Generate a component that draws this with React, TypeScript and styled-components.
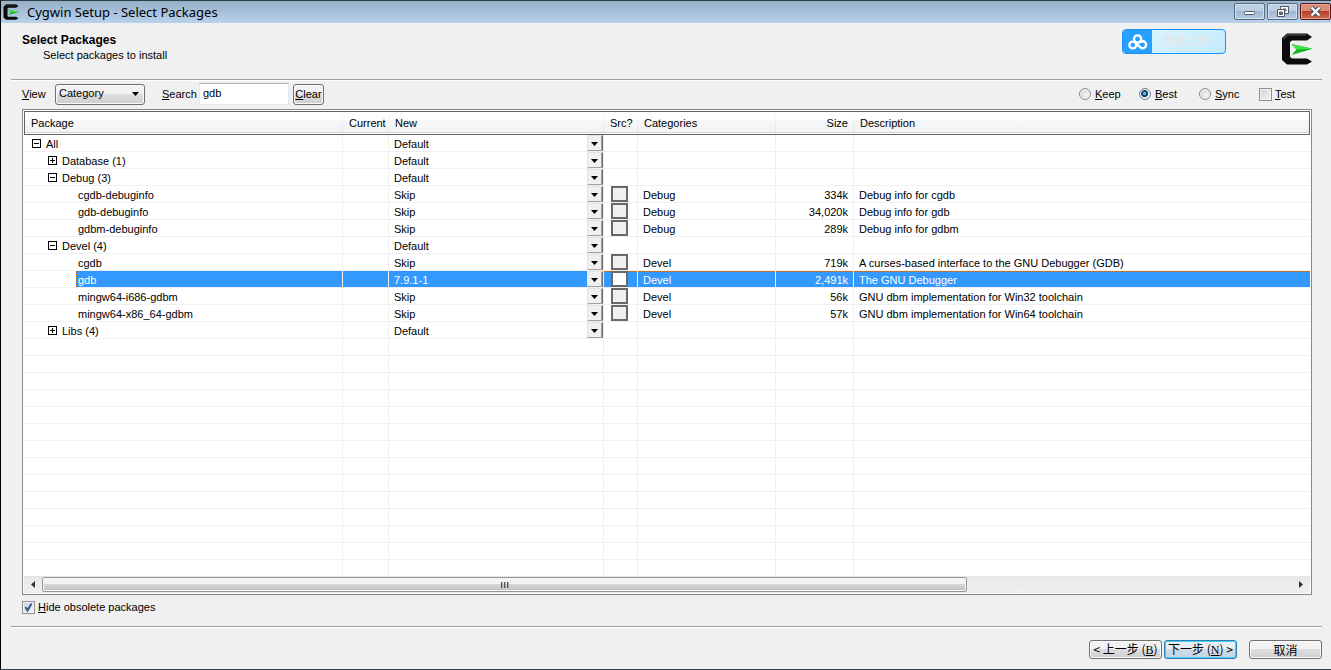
import React from 'react';
import styled, { createGlobalStyle, css } from 'styled-components';

const GlobalStyle = createGlobalStyle`
  * { box-sizing: border-box; }
  body { margin: 0; background: #f0f0f0; }
  body, button, input, select {
    font-family: "Liberation Sans", "Noto Sans CJK SC", sans-serif;
    font-size: 11px;
    line-height: 16px;
    color: #000;
  }
`;

const Window = styled.div`
  display: flex;
  flex-direction: column;
  height: 100vh;
  min-height: 480px;
  background: #f0f0f0;
  border: 1px solid #2f3f49;
  border-left-color: #000;
  border-right: 0;
`;

const TitleBar = styled.header`
  display: flex;
  align-items: center;
  height: 22px;
  padding: 0 0 0 2px;
  background: linear-gradient(#96b0ca, #b9d1ea);
`;

const Title = styled.h1`
  flex: 1;
  margin: 0 0 0 8px;
  font: 13px/20px "Noto Sans", sans-serif;
`;

const CaptionButtons = styled.div`
  display: flex;
  align-self: flex-start;
  gap: 2px;
  padding-top: 2px;
`;

const CaptionButton = styled.button<{ $close?: boolean }>`
  display: grid;
  place-items: center;
  width: 31px;
  height: 17px;
  padding: 0;
  border: 1px solid ${(p) => (p.$close ? '#5b1a1a' : '#596b80')};
  border-radius: 2px;
  box-shadow: inset 0 0 0 1px ${(p) => (p.$close ? '#e3a493' : '#d3e1f0')};
  background: ${(p) =>
    p.$close
      ? 'linear-gradient(#d98c77 0 45%, #b8402a 50%, #cf6a4d)'
      : 'linear-gradient(#bccfe3 0 45%, #9eb6d1 50%, #b5cce4)'};
`;

const Banner = styled.div`
  display: flex;
  align-items: flex-start;
  justify-content: space-between;
  height: 56px;
  padding: 6px 18px 0 21px;
`;

const Heading = styled.div`
  padding-top: 3px;
`;

const BannerTitle = styled.h2`
  margin: 0;
  font-size: 12px;
  line-height: 16px;
`;

const BannerText = styled.p`
  margin: 0 0 0 21px;
  line-height: 14px;
`;

const BannerRight = styled.div`
  display: flex;
  gap: 55px;
`;

const LogoSpot = styled.div`
  padding-top: 4px;
`;

const UploadButton = styled.button`
  display: flex;
  width: 104px;
  height: 25px;
  padding: 0;
  overflow: hidden;
  border: 1px solid #1b93fb;
  border-radius: 4px;
  background: linear-gradient(150deg, #dff5ff, #c2ebff);
`;

const UploadIcon = styled.span`
  display: grid;
  place-items: center;
  width: 29px;
  height: 23px;
  background: #27a0ff;
`;

const UploadLabel = styled.span`
  flex: 1;
  padding-right: 4px;
  font-weight: 700;
  font-size: 12px;
  line-height: 23px;
  color: #e3e8ec;
`;

const Divider = styled.hr`
  width: auto;
  height: 2px;
  margin: 0 9px 0 10px;
  border: 0;
  border-top: 1px solid #a0a0a0;
  background: #fff;
`;

const Toolbar = styled.div`
  display: flex;
  align-items: flex-start;
  justify-content: space-between;
  height: 28px;
  padding: 1px 20px 0 21px;
`;

const Group = styled.div`
  display: flex;
  align-items: center;
  height: 24px;
`;

const FieldLabel = styled.label<{ $width: number }>`
  width: ${(p) => p.$width}px;
`;

const buttonFace = css`
  border: 1px solid #707070;
  border-radius: 3px;
  box-shadow: inset 0 0 0 1px #fafafa;
  background: linear-gradient(#f2f2f2 0 48%, #dddddd 50%, #cfcfcf);
`;

const SelectWrap = styled.span`
  display: grid;
  grid-template-columns: 1fr 12px;
  align-items: center;
  width: 90px;
  height: 21px;
  margin-right: 17px;
  ${buttonFace}
`;

const ViewSelect = styled.select`
  grid-area: 1 / 1 / 2 / 3;
  appearance: none;
  height: 19px;
  padding: 0 0 2px 3px;
  border: 0;
  background: none;
`;

const ArrowSvg = styled.svg`
  grid-area: 1 / 2;
  pointer-events: none;
`;

const SearchInput = styled.input`
  width: 90px;
  height: 22px;
  margin-right: 4px;
  padding: 0 3px 2px;
  border: 1px solid #e3e9ef;
  border-top-color: #abadb3;
  background: #fff;
`;

const ClearButton = styled.button`
  width: 31px;
  height: 21px;
  padding: 0;
  ${buttonFace}
`;

const Option = styled.label<{ $last?: boolean }>`
  display: flex;
  align-items: center;
  gap: ${(p) => (p.$last ? 3 : 4)}px;
  width: ${(p) => (p.$last ? 52 : 60)}px;
`;

const Radio = styled.input`
  appearance: none;
  width: 12px;
  height: 12px;
  margin: 0;
  border: 1px solid #8e8f8f;
  border-radius: 50%;
  background: radial-gradient(circle at 60% 60%, #f4f4f4, #cfd2d6);
  box-shadow: inset 0 0 0 1px #f4f4f4;
  &:checked {
    border-color: #6f8296;
    background: radial-gradient(circle at 45% 45%, #5ec4ee 0 1px, #14527f 2px, #0c2c4c 3px, #dfe8ef 4px);
  }
`;

const Tick = styled.span`
  display: grid;
  width: 13px;
  height: 13px;
  input,
  svg {
    grid-area: 1 / 1;
  }
  svg {
    display: none;
    pointer-events: none;
  }
  input:checked + svg {
    display: block;
  }
`;

const TickInput = styled.input`
  appearance: none;
  width: 13px;
  height: 13px;
  margin: 0;
  border: 1px solid #8e8f8f;
  background: linear-gradient(135deg, #cdd1d6, #f6f6f6);
  box-shadow: inset 0 0 0 1px #f4f4f4;
`;

const Panel = styled.main`
  display: flex;
  flex: 1 1 0;
  flex-direction: column;
  min-height: 0;
  margin: 0 19px 0 21px;
  padding: 1px;
  border: 1px solid #828790;
  background: #fff;
`;

const ListArea = styled.div`
  flex: 1 1 0;
  min-height: 0;
  overflow: hidden;
`;

const Table = styled.table`
  width: 100%;
  table-layout: fixed;
  border-collapse: separate;
  border-spacing: 0;
`;

const Th = styled.th<{ $right?: boolean }>`
  height: 24px;
  padding: 0 6px 1px;
  border-top: 1px solid #646464;
  border-bottom: 1px solid #646464;
  font-weight: 400;
  white-space: nowrap;
  text-align: ${(p) => (p.$right ? 'right' : 'left')};
  background:
    linear-gradient(#fff, #fff) left bottom / 100% 1px no-repeat,
    linear-gradient(#d5d5d5, #d5d5d5) left bottom 1px / 100% 1px no-repeat,
    linear-gradient(#fff, #dedfe1) right top / 1px 100% no-repeat,
    linear-gradient(#fff 0 8px, #f7f8f9 8px, #f1f2f3);
  &:first-child {
    border-left: 1px solid #646464;
  }
  &:last-child {
    border-right: 1px solid #646464;
  }
`;

const Td = styled.td<{ $right?: boolean }>`
  height: 17px;
  padding: 2px 5px 0;
  border-right: 1px solid #f0f0f0;
  border-bottom: 1px solid #f0f0f0;
  line-height: 14px;
  white-space: nowrap;
  text-align: ${(p) => (p.$right ? 'right' : 'left')};
  &:last-child {
    border-right: 0;
  }
`;

const NameCell = styled(Td)<{ $level: number }>`
  padding: 0 0 0 ${(p) => [8, 24, 52][p.$level]}px;
`;

const ControlCell = styled(Td)`
  padding: 0;
`;

const Row = styled.tr<{ $selected?: boolean }>`
  ${(p) =>
    p.$selected &&
    css`
      td:not(:first-child),
      td:first-child > div {
        color: #fff;
        background: repeating-linear-gradient(90deg, #b8702c 0 1px, #3399ff 1px 2px) top / 100% 1px no-repeat #3399ff;
      }
      td:first-child > div {
        border-left: 1px dotted #cc6600;
      }
    `}
`;

const Name = styled.div<{ $leaf?: boolean }>`
  display: flex;
  align-items: center;
  gap: 5px;
  height: 16px;
  padding-top: 1px;
  padding-left: ${(p) => (p.$leaf ? 1 : 0)}px;
  border-left: ${(p) => (p.$leaf ? '1px solid transparent' : '0')};
`;

const Expander = styled.button`
  display: block;
  width: 9px;
  height: 9px;
  padding: 0;
  border: 0;
  background: none;
  svg {
    display: block;
  }
`;

const Combo = styled.div`
  display: grid;
  grid-template-columns: 1fr 16px;
  align-items: center;
  height: 16px;
  padding-left: 5px;
`;

const ComboSelect = styled.select`
  grid-area: 1 / 1 / 2 / 3;
  appearance: none;
  height: 16px;
  padding: 2px 0 0;
  border: 0;
  line-height: 14px;
  color: inherit;
  background: none;
`;

const ComboArrow = styled.span`
  grid-area: 1 / 2;
  display: grid;
  place-items: center;
  height: 16px;
  padding: 1px 1px 0 0;
  border: 1px solid #e3e3e3;
  border-right-color: #696969;
  border-bottom-color: #a0a0a0;
  box-shadow: inset -1px 0 #a0a0a0;
  background: #f0f0f0;
  pointer-events: none;
  svg {
    display: block;
  }
`;

const SourceBox = styled.input<{ $active?: boolean }>`
  display: block;
  appearance: none;
  width: 17px;
  height: 16px;
  margin: 0 0 0 7px;
  border: 2px solid #696969;
  background: ${(p) => (p.$active ? '#fff' : '#f0f0f0')};
`;

const ScrollBar = styled.div`
  display: flex;
  height: 17px;
  border-top: 1px solid #e3e3e3;
  background: linear-gradient(#e9e9e9, #f0f0f0);
`;

const ScrollArrow = styled.button`
  display: grid;
  place-items: center;
  width: 18px;
  padding: 0 1px 2px 0;
  border: 0;
  background: none;
`;

const Track = styled.div`
  flex: 1;
`;

const Thumb = styled.div`
  display: grid;
  place-items: center;
  width: 74%;
  height: 15px;
  border: 1px solid #979797;
  border-radius: 2px;
  box-shadow: inset 0 0 0 1px #f4f4f4;
  background: linear-gradient(#f2f2f2 0 45%, #d6d6d6 50%, #bfbfbf);
`;

const HideRow = styled.div`
  display: flex;
  height: 31px;
  padding: 5px 21px 0;
`;

const HideLabel = styled.label`
  display: flex;
  align-items: center;
  gap: 3px;
  height: 14px;
`;

const Footer = styled.footer`
  display: flex;
  justify-content: flex-end;
  height: 41px;
  padding: 12px 9px 0;
`;

const WizardButton = styled.button<{ $primary?: boolean; $apart?: boolean }>`
  width: 73px;
  height: 19px;
  margin-left: ${(p) => (p.$apart ? 12 : 2)}px;
  padding: 0;
  font: 12px/16px "Noto Sans CJK SC", sans-serif;
  white-space: nowrap;
  ${buttonFace}
  ${(p) =>
    p.$primary &&
    css`
      border-color: #2c7fb0;
      box-shadow: inset 0 0 0 1px #48cdf5;
      background: linear-gradient(#e6eff6 0 48%, #cfdce8 50%, #c2d3e2);
    `}
  u {
    font-family: "Liberation Serif", serif;
  }
`;

type Item = {
  name: string;
  level: number;
  open?: boolean;
  action: string;
  category?: string;
  size?: string;
  description?: string;
  selected?: boolean;
};

const items: Item[] = [
  { name: 'All', level: 0, open: true, action: 'Default' },
  { name: 'Database (1)', level: 1, open: false, action: 'Default' },
  { name: 'Debug (3)', level: 1, open: true, action: 'Default' },
  { name: 'cgdb-debuginfo', level: 2, action: 'Skip', category: 'Debug', size: '334k', description: 'Debug info for cgdb' },
  { name: 'gdb-debuginfo', level: 2, action: 'Skip', category: 'Debug', size: '34,020k', description: 'Debug info for gdb' },
  { name: 'gdbm-debuginfo', level: 2, action: 'Skip', category: 'Debug', size: '289k', description: 'Debug info for gdbm' },
  { name: 'Devel (4)', level: 1, open: true, action: 'Default' },
  { name: 'cgdb', level: 2, action: 'Skip', category: 'Devel', size: '719k', description: 'A curses-based interface to the GNU Debugger (GDB)' },
  { name: 'gdb', level: 2, action: '7.9.1-1', category: 'Devel', size: '2,491k', description: 'The GNU Debugger', selected: true },
  { name: 'mingw64-i686-gdbm', level: 2, action: 'Skip', category: 'Devel', size: '56k', description: 'GNU dbm implementation for Win32 toolchain' },
  { name: 'mingw64-x86_64-gdbm', level: 2, action: 'Skip', category: 'Devel', size: '57k', description: 'GNU dbm implementation for Win64 toolchain' },
  { name: 'Libs (4)', level: 1, open: false, action: 'Default' },
];

const columnWidths = [319, 46, 215, 34, 138, 78];
const blankRows = Array.from({ length: 14 }, (_, i) => i);

function CygwinLogo({ size }: { size: number }) {
  return (
    <svg width={size} height={size} viewBox="0 0 32 32" aria-hidden="true">
      <path d="M6 0.5H26L31 4L26 7.5H11L9 9V24L11 25.5H26L31 28.5L26 31.5H6L1 27V5Z" fill="#0b0b0b" />
      <path d="M2.5 6L6.5 2H25" fill="none" stroke="#555" strokeWidth="1.2" />
      <path d="M10.5 11L31.5 15.8L10.5 22L15.5 16.4Z" fill="#0db41a" />
      <path d="M10.5 11L31.5 15.8L15.5 16.4Z" fill="#45e04a" />
    </svg>
  );
}

function DownArrow() {
  return (
    <svg width="7" height="4" viewBox="0 0 7 4" aria-hidden="true">
      <path d="M0 0H7L3.5 4Z" />
    </svg>
  );
}

function TreeToggle({ open, name }: { open: boolean; name: string }) {
  return (
    <Expander type="button" aria-label={name} aria-expanded={open}>
      <svg width="9" height="9" shapeRendering="crispEdges" stroke="#000" fill="none">
        <rect x="0.5" y="0.5" width="8" height="8" />
        <path d={open ? 'M2 4.5H7' : 'M2 4.5H7M4.5 2V7'} />
      </svg>
    </Expander>
  );
}

function TickBox({ checked }: { checked?: boolean }) {
  return (
    <Tick>
      <TickInput type="checkbox" defaultChecked={checked} />
      <svg width="13" height="13" viewBox="0 0 13 13">
        <path d="M3.5 6L5.5 9.5L9.5 2.5" fill="none" stroke="#3c5390" strokeWidth="2" />
      </svg>
    </Tick>
  );
}

function PackageRow({ item }: { item: Item }) {
  const leaf = item.level === 2;
  return (
    <Row $selected={item.selected}>
      <NameCell $level={item.level}>
        <Name $leaf={leaf}>
          {!leaf && <TreeToggle open={!!item.open} name={item.name} />}
          {item.name}
        </Name>
      </NameCell>
      <Td />
      <ControlCell>
        <Combo>
          <ComboSelect aria-label={`New version of ${item.name}`}>
            <option>{item.action}</option>
          </ComboSelect>
          <ComboArrow>
            <DownArrow />
          </ComboArrow>
        </Combo>
      </ControlCell>
      <ControlCell>
        {leaf && <SourceBox type="checkbox" $active={item.selected} aria-label={`Source of ${item.name}`} />}
      </ControlCell>
      <Td>{item.category}</Td>
      <Td $right>{item.size}</Td>
      <Td>{item.description}</Td>
    </Row>
  );
}

export default function App() {
  return (
    <>
      <GlobalStyle />
      <Window>
        <TitleBar>
          <CygwinLogo size={16} />
          <Title>Cygwin Setup - Select Packages</Title>
          <CaptionButtons>
            <CaptionButton type="button" aria-label="Minimize">
              <svg width="13" height="9">
                <rect x="1.5" y="4.5" width="10" height="3" rx="1" fill="#fff" stroke="#535666" />
              </svg>
            </CaptionButton>
            <CaptionButton type="button" aria-label="Restore">
              <svg width="12" height="11" fill="#fff" stroke="#535666">
                <path d="M3.5 0.5H11.5V7.5H3.5Z M6 3H9V5H6Z" fillRule="evenodd" />
                <path d="M0.5 3.5H7.5V10.5H0.5Z M2.5 6H5.5V8.5H2.5Z" fillRule="evenodd" />
              </svg>
            </CaptionButton>
            <CaptionButton type="button" aria-label="Close" $close>
              <svg width="13" height="11" viewBox="0 0 13 11">
                <path d="M2.5 1.5L10.5 9.5M10.5 1.5L2.5 9.5" stroke="#535666" strokeWidth="4.4" />
                <path d="M2.5 1.5L10.5 9.5M10.5 1.5L2.5 9.5" stroke="#fff" strokeWidth="2.2" />
              </svg>
            </CaptionButton>
          </CaptionButtons>
        </TitleBar>

        <Banner>
          <Heading>
            <BannerTitle>Select Packages</BannerTitle>
            <BannerText>Select packages to install</BannerText>
          </Heading>
          <BannerRight>
            <UploadButton type="button">
              <UploadIcon>
                <svg width="20" height="16" viewBox="0 0 20 16" fill="none" stroke="#fff" strokeWidth="2.4">
                  <circle cx="9.6" cy="5" r="3.6" />
                  <circle cx="4.8" cy="11" r="3.4" />
                  <path d="M7.2 8.4L11.8 12.8A3.5 3.5 0 1 0 12 8.4" />
                </svg>
              </UploadIcon>
              <UploadLabel>拖拽上传</UploadLabel>
            </UploadButton>
            <LogoSpot>
              <CygwinLogo size={32} />
            </LogoSpot>
          </BannerRight>
        </Banner>
        <Divider />

        <Toolbar>
          <Group>
            <FieldLabel htmlFor="view" $width={33}>
              <u>V</u>iew
            </FieldLabel>
            <SelectWrap>
              <ViewSelect id="view">
                <option>Category</option>
              </ViewSelect>
              <ArrowSvg width="7" height="4" viewBox="0 0 7 4">
                <path d="M0 0H7L3.5 4Z" />
              </ArrowSvg>
            </SelectWrap>
            <FieldLabel htmlFor="search" $width={37}>
              <u>S</u>earch
            </FieldLabel>
            <SearchInput id="search" type="text" defaultValue="gdb" />
            <ClearButton type="button">
              <u>C</u>lear
            </ClearButton>
          </Group>
          <Group>
            <Option>
              <Radio type="radio" name="trust" />
              <span><u>K</u>eep</span>
            </Option>
            <Option>
              <Radio type="radio" name="trust" defaultChecked />
              <span><u>B</u>est</span>
            </Option>
            <Option>
              <Radio type="radio" name="trust" />
              <span><u>S</u>ync</span>
            </Option>
            <Option $last>
              <TickBox />
              <span><u>T</u>est</span>
            </Option>
          </Group>
        </Toolbar>

        <Panel>
          <ListArea>
            <Table>
              <colgroup>
                {columnWidths.map((width, i) => (
                  <col key={i} width={width} />
                ))}
                <col />
              </colgroup>
              <thead>
                <tr>
                  <Th>Package</Th>
                  <Th>Current</Th>
                  <Th>New</Th>
                  <Th>Src?</Th>
                  <Th>Categories</Th>
                  <Th $right>Size</Th>
                  <Th>Description</Th>
                </tr>
              </thead>
              <tbody>
                {items.map((item) => (
                  <PackageRow key={item.name} item={item} />
                ))}
                {blankRows.map((i) => (
                  <tr key={i}>
                    <Td /><Td /><Td /><Td /><Td /><Td /><Td />
                  </tr>
                ))}
              </tbody>
            </Table>
          </ListArea>
          <ScrollBar>
            <ScrollArrow type="button" aria-label="Scroll left">
              <svg width="4" height="7"><path d="M4 0V7L0 3.5Z" fill="#303030" /></svg>
            </ScrollArrow>
            <Track>
              <Thumb>
                <svg width="9" height="6" stroke="#555" shapeRendering="crispEdges">
                  <path d="M1.5 0V6M4.5 0V6M7.5 0V6" />
                  <path d="M2.5 0V6M5.5 0V6M8.5 0V6" stroke="#aaa" />
                </svg>
              </Thumb>
            </Track>
            <ScrollArrow type="button" aria-label="Scroll right">
              <svg width="4" height="7"><path d="M0 0V7L4 3.5Z" fill="#303030" /></svg>
            </ScrollArrow>
          </ScrollBar>
        </Panel>

        <HideRow>
          <HideLabel>
            <TickBox checked />
            <span><u>H</u>ide obsolete packages</span>
          </HideLabel>
        </HideRow>
        <Divider />
        <Footer>
          <WizardButton type="button">&lt; 上一步 (<u>B</u>)</WizardButton>
          <WizardButton type="button" $primary>下一步 (<u>N</u>) &gt;</WizardButton>
          <WizardButton type="button" $apart>取消</WizardButton>
        </Footer>
      </Window>
    </>
  );
}
